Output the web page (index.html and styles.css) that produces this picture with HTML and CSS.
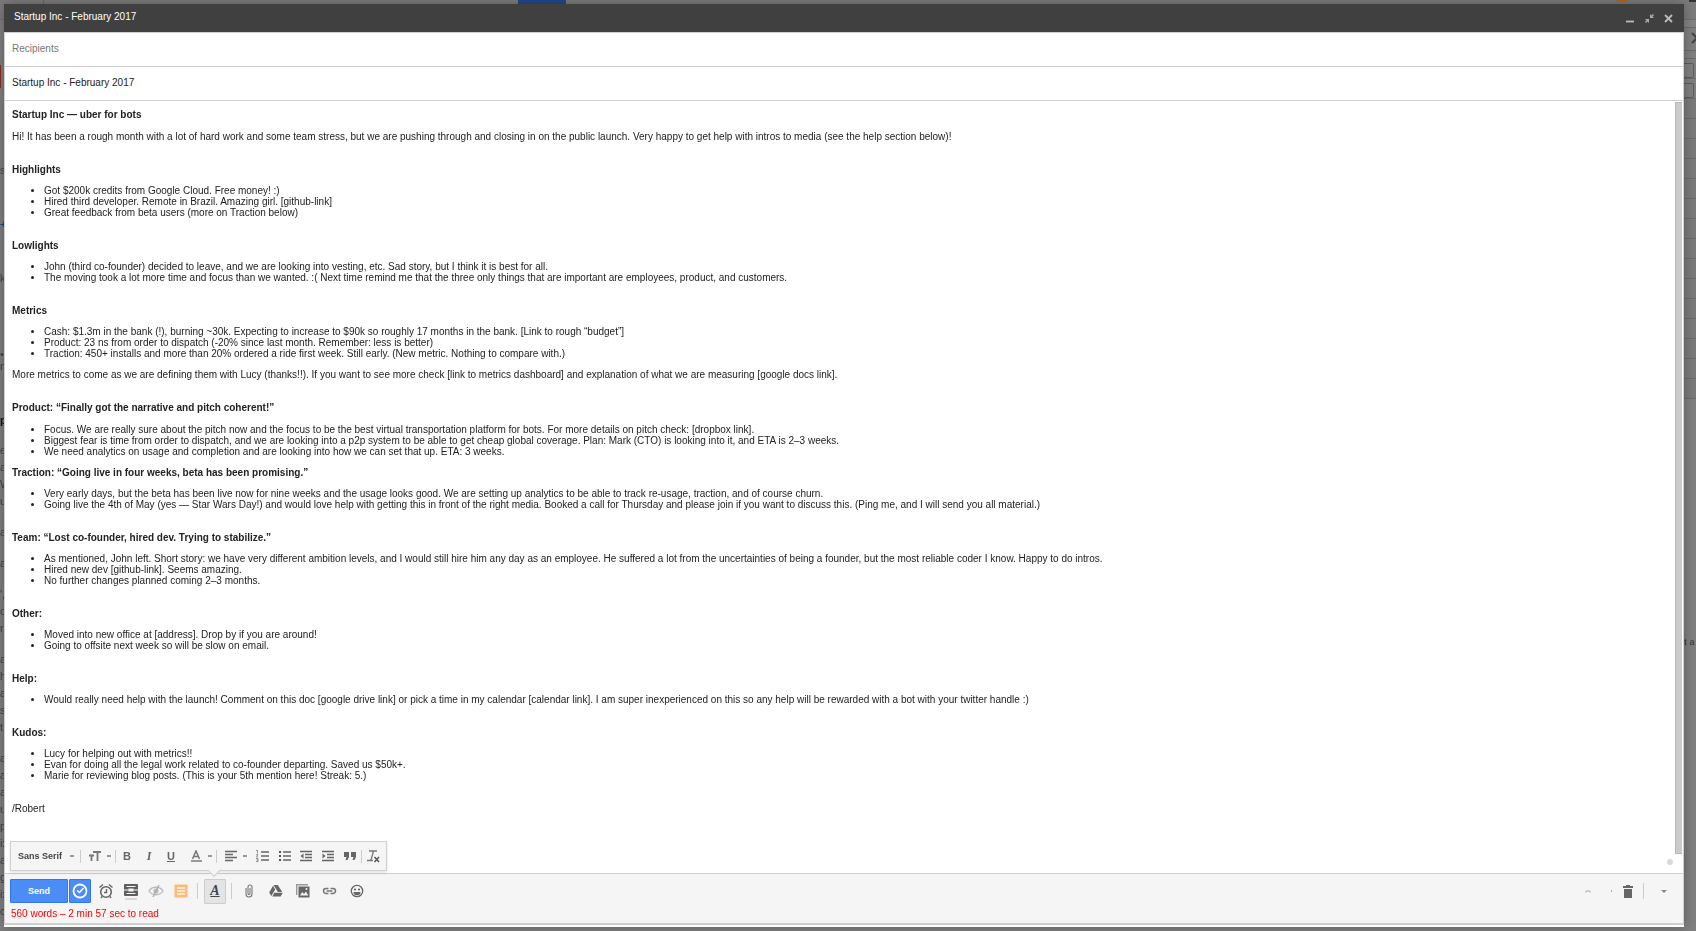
FILE: index.html
```
<!DOCTYPE html>
<html lang="en">
<head>
    <meta charset="UTF-8">
    <meta name="viewport" content="width=device-width, initial-scale=1.0">
    <title>Startup Inc - February 2017</title>
    <link rel="stylesheet" href="styles.css">
</head>
<body>

    <!-- dimmed inbox behind the window -->
    <div class="backdrop" aria-hidden="true">
        <div class="topbar">
            <div class="topbar-logo"></div>
            <div class="topbar-search"></div>
            <div class="topbar-badge"></div>
            <div class="topbar-apps"></div>
        </div>
        <div class="columns">
            <div class="nav">
                <div class="nav-compose"></div>
                <div class="nav-head">s</div>
                <div class="nav-head plus">+</div>
                <div class="nav-head">k</div>
                <div class="nav-people">•<br>n</div>
                <b class="nav-chat">p</b>
                <div class="nav-group">e<br>a<br>W<br>ur</div>
                <div class="nav-group">a</div>
                <div class="nav-group">a</div>
                <div class="nav-group">',<br>o<br>r</div>
                <div class="nav-group">a<br>h<br>a<br>sc<br>t</div>
                <div class="nav-group">a<br>a<br>a<br>u<br>p<br>ix<br>a<br>g<br>ix<br>o call</div>
            </div>
            <div class="side">
                <div class="side-bar"></div>
                <div class="side-arrow">
                    <svg width="5" height="12" viewBox="0 0 5 12"><path d="M1 1l5 5-5 5" fill="none" stroke="#444" stroke-width="2"/></svg>
                </div>
                <div class="side-line"></div>
                <div class="side-row"><span></span></div>
                <div class="side-row"><span></span></div>
                <div class="side-rows"></div>
                <b class="side-text">t a</b>
            </div>
        </div>
    </div>

    <main class="window">
        <header class="titlebar">
            <h1>Startup Inc - February 2017</h1>
            <div class="titlebar-buttons">
                <button type="button" aria-label="Minimize"><svg width="11" height="11" viewBox="0 0 11 11"><path d="M1 8.500h8" stroke="#bbb" stroke-width="1.800"/></svg></button>
                <button type="button" aria-label="Exit full screen"><svg width="11" height="11" viewBox="0 0 11 11"><path d="M6 1v4h4L8.500 3.500 10 2 9 1 7.500 2.500zM5 10V6H1l1.500 1.500L1 9l1 1 1.500-1.500z" fill="#aaa"/></svg></button>
                <button type="button" aria-label="Close"><svg width="11" height="11" viewBox="0 0 11 11"><path d="M2 2l7 7M9 2L2 9" stroke="#bbb" stroke-width="1.800"/></svg></button>
            </div>
        </header>

        <input class="field field-first" type="text" placeholder="Recipients" aria-label="Recipients">
        <input class="field" type="text" value="Startup Inc - February 2017" aria-label="Subject">

        <div class="body">
            <div class="message" contenteditable="true" spellcheck="false" role="textbox" aria-label="Message Body">
                <section>
                    <h2>Startup Inc — uber for bots</h2>
                    <p>Hi! It has been a rough month with a lot of hard work and some team stress, but we are pushing through and closing in on the public launch. Very happy to get help with intros to media (see the help section below)!</p>
                </section>
                <section>
                    <h2>Highlights</h2>
                    <ul>
                        <li>Got $200k credits from Google Cloud. Free money! :)</li>
                        <li>Hired third developer. Remote in Brazil. Amazing girl. [github-link]</li>
                        <li>Great feedback from beta users (more on Traction below)</li>
                    </ul>
                </section>
                <section>
                    <h2>Lowlights</h2>
                    <ul>
                        <li>John (third co-founder) decided to leave, and we are looking into vesting, etc. Sad story, but I think it is best for all.</li>
                        <li>The moving took a lot more time and focus than we wanted. :( Next time remind me that the three only things that are important are employees, product, and customers.</li>
                    </ul>
                </section>
                <section>
                    <h2>Metrics</h2>
                    <ul>
                        <li>Cash: $1.3m in the bank (!), burning ~30k. Expecting to increase to $90k so roughly 17 months in the bank. [Link to rough “budget”]</li>
                        <li>Product: 23 ns from order to dispatch (-20% since last month. Remember: less is better)</li>
                        <li>Traction: 450+ installs and more than 20% ordered a ride first week. Still early. (New metric. Nothing to compare with.)</li>
                    </ul>
                    <p>More metrics to come as we are defining them with Lucy (thanks!!). If you want to see more check [link to metrics dashboard] and explanation of what we are measuring [google docs link].</p>
                </section>
                <section>
                    <h2>Product: “Finally got the narrative and pitch coherent!”</h2>
                    <ul class="spaced">
                        <li>Focus. We are really sure about the pitch now and the focus to be the best virtual transportation platform for bots. For more details on pitch check: [dropbox link].</li>
                        <li>Biggest fear is time from order to dispatch, and we are looking into a p2p system to be able to get cheap global coverage. Plan: Mark (CTO) is looking into it, and ETA is 2–3 weeks.</li>
                        <li>We need analytics on usage and completion and are looking into how we can set that up. ETA: 3 weeks.</li>
                    </ul>
                    <h2>Traction: “Going live in four weeks, beta has been promising.”</h2>
                    <ul>
                        <li>Very early days, but the beta has been live now for nine weeks and the usage looks good. We are setting up analytics to be able to track re-usage, traction, and of course churn.</li>
                        <li>Going live the 4th of May (yes — Star Wars Day!) and would love help with getting this in front of the right media. Booked a call for Thursday and please join if you want to discuss this. (Ping me, and I will send you all material.)</li>
                    </ul>
                </section>
                <section>
                    <h2>Team: “Lost co-founder, hired dev. Trying to stabilize.”</h2>
                    <ul>
                        <li>As mentioned, John left. Short story: we have very different ambition levels, and I would still hire him any day as an employee. He suffered a lot from the uncertainties of being a founder, but the most reliable coder I know. Happy to do intros.</li>
                        <li>Hired new dev [github-link]. Seems amazing.</li>
                        <li>No further changes planned coming 2–3 months.</li>
                    </ul>
                </section>
                <section>
                    <h2>Other:</h2>
                    <ul>
                        <li>Moved into new office at [address]. Drop by if you are around!</li>
                        <li>Going to offsite next week so will be slow on email.</li>
                    </ul>
                </section>
                <section>
                    <h2>Help:</h2>
                    <ul>
                        <li>Would really need help with the launch! Comment on this doc [google drive link] or pick a time in my calendar [calendar link]. I am super inexperienced on this so any help will be rewarded with a bot with your twitter handle :)</li>
                    </ul>
                </section>
                <section>
                    <h2>Kudos:</h2>
                    <ul>
                        <li>Lucy for helping out with metrics!!</li>
                        <li>Evan for doing all the legal work related to co-founder departing. Saved us $50k+.</li>
                        <li>Marie for reviewing blog posts. (This is your 5th mention here! Streak: 5.)</li>
                    </ul>
                </section>
                <p>/Robert</p>
            </div>
            <div class="scroll">
                <div class="scroll-thumb"></div>
                <div class="scroll-dot"></div>
            </div>

            <div class="format-bar" role="toolbar" aria-label="Formatting">
                <label class="font-select">
                    <select aria-label="Font"><option>Sans Serif</option></select>
                    <i class="caret"></i>
                </label>
                <i class="sep"></i>
                <button type="button" class="wide" aria-label="Size">
                    <svg width="12" height="12" viewBox="0 0 12 12"><path d="M4 2h8M8.500 2v9M0 5.500h5M2.500 5.500V11" fill="none" stroke="#777" stroke-width="1.800"/></svg>
                    <i class="caret"></i>
                </button>
                <i class="sep"></i>
                <button type="button" class="letter bold" aria-label="Bold">B</button>
                <button type="button" class="letter italic" aria-label="Italic">I</button>
                <button type="button" class="letter underline" aria-label="Underline">U</button>
                <button type="button" class="wide" aria-label="Text color">
                    <svg width="12" height="12" viewBox="0 0 12 12"><path d="M2.500 9L6 1l3.500 8M4 6.500h4" fill="none" stroke="#777" stroke-width="1.500"/><path d="M1 11h11" stroke="#999" stroke-width="2"/></svg>
                    <i class="caret"></i>
                </button>
                <i class="sep"></i>
                <button type="button" class="wide" aria-label="Align">
                    <svg width="12" height="12" viewBox="0 0 12 12"><path d="M0 1.500h12M0 4.500h8M0 7.500h12M0 10.500h8" stroke="#666" stroke-width="1.300"/></svg>
                    <i class="caret"></i>
                </button>
                <button type="button" aria-label="Numbered list"><svg width="13" height="12" viewBox="0 0 13 12"><path d="M5 2h8M5 6h8M5 10h8" stroke="#666" stroke-width="1.300"/><path d="M0 .5h1.500v3M0 4.800h2L.5 7H2M0 8.500h2v3H0M.5 10H2" fill="none" stroke="#777" stroke-width=".8"/></svg></button>
                <button type="button" aria-label="Bulleted list"><svg width="13" height="12" viewBox="0 0 13 12"><path d="M5 2h8M5 6h8M5 10h8" stroke="#666" stroke-width="1.300"/><path d="M1 2h2M1 6h2M1 10h2" stroke="#555" stroke-width="2"/></svg></button>
                <button type="button" aria-label="Indent less"><svg width="12" height="12" viewBox="0 0 12 12"><path d="M0 1.500h12M5 4.500h7M5 7.500h7M0 10.500h12" stroke="#666" stroke-width="1.300"/><path d="M3.500 3.500v5L.5 6z" fill="#666"/></svg></button>
                <button type="button" aria-label="Indent more"><svg width="12" height="12" viewBox="0 0 12 12"><path d="M0 1.500h12M5 4.500h7M5 7.500h7M0 10.500h12" stroke="#666" stroke-width="1.300"/><path d="M.5 3.500v5l3-2.500z" fill="#666"/></svg></button>
                <button type="button" aria-label="Quote"><svg width="12" height="12" viewBox="0 0 12 12"><path d="M0 2h5v5L3.500 10H1.500l1-3H0zM7 2h5v5l-1.500 3h-2l1-3H7z" fill="#666"/></svg></button>
                <i class="sep"></i>
                <button type="button" aria-label="Remove formatting"><svg width="13" height="13" viewBox="0 0 13 13"><path d="M2 1h8M6.500 1L4 10M0 10.500h6" fill="none" stroke="#777" stroke-width="1.300"/><path d="M7.500 7l4.500 5M12 7l-4.500 5" stroke="#555" stroke-width="1.500"/></svg></button>
                <div class="notch"></div>
            </div>
        </div>

        <footer class="footer">
            <div class="actions">
                <button type="button" class="send">Send</button>
                <button type="button" class="send later" aria-label="Send later"><svg width="16" height="16" viewBox="0 0 16 16"><circle cx="8" cy="8" r="6.500" fill="none" stroke="#fff" stroke-width="1.800"/><path d="M5 7.500L7.500 9.500l4-4.500" fill="none" stroke="#fff" stroke-width="1.600"/></svg></button>
                <div class="group plugins">
                    <button type="button" aria-label="Reminder"><svg width="16" height="16" viewBox="0 0 16 16"><circle cx="8" cy="9" r="5.300" fill="none" stroke="#666" stroke-width="1.600"/><path d="M1.500 4.500L5 1.500M14.500 4.500L11 1.500M8.500 6v3.500H6M4 13.500l-1 1.500M12 13.500l1 1.500" fill="none" stroke="#666" stroke-width="1.400"/></svg></button>
                    <button type="button" aria-label="Templates"><svg width="14" height="17" viewBox="0 0 14 17"><path d="M1 1h12q1 0 1 1v4.500H9.500v-1h-5v1H0V2q0-1 1-1zM0 7.500h4.500v1h5v-1H14V12q0 1-1 1H1q-1 0-1-1z" fill="#5f5f5f"/><path d="M2.500 3.500h9M2.500 10.500h9" stroke="#f5f5f5"/><path d="M1 16h12" stroke="#bbb"/></svg></button>
                    <button type="button" aria-label="Tracking off"><svg width="16" height="12" viewBox="0 0 16 12"><path d="M1 6c3-5 11-5 14 0-3 5-11 5-14 0z" fill="none" stroke="#bbb" stroke-width="1.300"/><circle cx="8" cy="6" r="2.600" fill="#bbb"/><path d="M5 12L11 0" stroke="#aaa" stroke-width="1.300"/></svg></button>
                    <button type="button" aria-label="Notes"><svg width="14" height="14" viewBox="0 0 14 14"><path d="M.5 .5h13v13H.5z" fill="#fdbb79"/><path d="M3 4h8M3 7h8M3 10h8" stroke="#fff3e6" stroke-width="1.400"/></svg></button>
                </div>
                <i class="sep"></i>
                <button type="button" class="format-toggle" aria-label="Formatting options" aria-pressed="true">A</button>
                <i class="sep"></i>
                <div class="group attach">
                    <button type="button" aria-label="Attach files"><svg width="8" height="14" viewBox="0 0 8 14"><path d="M1 4v6a3 3 0 0 0 6 0V3a2 2 0 0 0-4 0v6.500a1 1 0 0 0 2 0V4" fill="none" stroke="#777" stroke-width="1.100"/></svg></button>
                    <button type="button" aria-label="Insert from Drive"><svg width="14" height="12" viewBox="0 0 14 12"><path d="M4.500 0h4.300l4.400 7H8.900zM4 .8l2.200 3.600L2.300 11 .2 7.500zM5.300 7.800h8.400L11.700 11.500H3.300z" fill="#666"/></svg></button>
                    <button type="button" aria-label="Insert photo"><svg width="14" height="14" viewBox="0 0 14 14"><path d="M.7 11V.7H12" fill="none" stroke="#999" stroke-width="1.400"/><path d="M2.500 2.500H13.500v11h-11z" fill="#666"/><path d="M4 11.500l2.200-3.500 1.800 2 2-2.500 2.300 4z" fill="#f4f4f4"/><circle cx="10.500" cy="5" r="1" fill="#f4f4f4"/></svg></button>
                    <button type="button" aria-label="Insert link"><svg width="15" height="8" viewBox="0 0 15 8"><path d="M6.500 1.500H4a2.500 2.500 0 0 0 0 5h2.500M8.500 1.500H11a2.500 2.500 0 0 1 0 5H8.500M4.500 4h6" fill="none" stroke="#777" stroke-width="1.500"/></svg></button>
                    <button type="button" aria-label="Insert emoji"><svg width="14" height="14" viewBox="0 0 14 14"><circle cx="7" cy="7" r="5.700" fill="none" stroke="#666" stroke-width="1.300"/><circle cx="5" cy="5.500" r="1" fill="#555"/><circle cx="9" cy="5.500" r="1" fill="#555"/><path d="M3.500 8h7a3.500 3.200 0 0 1-7 0z" fill="#666"/></svg></button>
                </div>
                <div class="group extra">
                    <svg class="faint" width="28" height="4" viewBox="0 0 28 4"><path d="M1 3.500V2h4v1.500M26.500 1v2" fill="none" stroke="#aaa"/></svg>
                    <button type="button" aria-label="Discard draft"><svg width="10" height="13" viewBox="0 0 10 13"><path d="M3 0h4v1h3v2H0V1h3zM1 4h8v9H1z" fill="#666"/></svg></button>
                    <i class="sep"></i>
                    <button type="button" class="more" aria-label="More options"><i class="caret"></i></button>
                </div>
            </div>
            <p class="words">560 words – 2 min 57 sec to read</p>
        </footer>
    </main>

</body>
</html>
```
FILE: styles.css
```
* {
    box-sizing: border-box;
}

body {
    margin: 0;
    padding: 4px 12px 4px 4px;
    height: 100vh;
    overflow: hidden;
    background: #808080;
    font-family: "Liberation Sans", Arial, sans-serif;
    font-size: 10px;
    line-height: 11px;
    color: #222;
}

h1, h2, p, ul {
    margin: 0;
    font-size: 10px;
}

button {
    display: flex;
    align-items: center;
    justify-content: center;
    padding: 0;
    border: none;
    background: transparent;
    font-family: inherit;
    cursor: pointer;
}

/* inbox behind */
.backdrop {
    position: fixed;
    inset: 0;
    z-index: -1;
    display: flex;
    flex-direction: column;
    overflow: hidden;
    color: #444;
}

.topbar {
    flex: none;
    display: flex;
    height: 20px;
    background: #7c7c7c;
    border-bottom: 1px solid #707070;
}

.topbar-logo {
    width: 44px;
    border-right: 1px solid #666;
}

.topbar-search {
    width: 48px;
    margin-left: 474px;
    background: #24488a;
}

.topbar-badge {
    width: 11px;
    height: 2px;
    margin-left: auto;
    background: #b8651b;
}

.topbar-apps {
    width: 7px;
    height: 2px;
    margin-left: 61px;
    background: #333;
}

.columns {
    flex: 1;
    display: flex;
    justify-content: space-between;
}

.nav {
    width: 30px;
    font-size: 11px;
    line-height: 17px;
    white-space: nowrap;
}

.nav-compose {
    width: 1px;
    height: 23px;
    margin: 45px 0 74px;
    background: #8a2a1c;
}

.nav-head {
    height: 54px;
}

.nav-head.plus {
    color: #1a3f86;
}

.nav-people {
    height: 88px;
    padding-top: 24px;
    line-height: 12px;
}

.nav-chat {
    display: block;
    height: 30px;
    color: #111;
}

.nav-group {
    margin-bottom: 14px;
}

.side {
    width: 12px;
}

.side-bar {
    height: 8px;
    background: #848484;
    border-bottom: 1px solid #6c6c6c;
}

.side-arrow {
    height: 23px;
    padding: 4px 0 0 7px;
    border-bottom: 1px solid #6c6c6c;
}

.side-line {
    height: 8px;
    border-bottom: 1px solid #6c6c6c;
}

.side-row {
    height: 20px;
    padding-top: 4px;
    border-bottom: 1px solid #6c6c6c;
}

.side-row span {
    display: block;
    width: 10px;
    height: 15px;
    border: 1px solid #5c5c5c;
    border-left: none;
    border-radius: 0 2px 2px 0;
}

.side-rows {
    height: 300px;
    background: repeating-linear-gradient(#7b7b7b 0, #7b7b7b 19px, #6c6c6c 19px, #6c6c6c 20px);
}

.side-text {
    display: block;
    padding-top: 238px;
    font-size: 9px;
    white-space: nowrap;
}

/* compose window */
.window {
    display: flex;
    flex-direction: column;
    height: 100%;
    padding-bottom: 2px;
    background: #fff;
    box-shadow: 0 0 12px rgba(0, 0, 0, .3);
}

.titlebar {
    display: flex;
    align-items: center;
    justify-content: space-between;
    height: 28px;
    padding: 0 6px 0 10px;
    background: #404040;
}

.titlebar h1 {
    padding-bottom: 4px;
    font-weight: normal;
    color: #fff;
}

.titlebar-buttons {
    display: flex;
}

.titlebar-buttons button {
    width: 19px;
    height: 19px;
}

.field {
    width: 100%;
    height: 34px;
    padding: 0 7px 2px;
    border: 1px solid #cfcfcf;
    border-top: none;
    border-radius: 0;
    outline: none;
    background: #fff;
    font-family: inherit;
    font-size: 10px;
    color: #222;
}

.field-first {
    height: 35px;
    border-top: 1px solid #cfcfcf;
}

.field::placeholder {
    color: #777;
}

.body {
    position: relative;
    flex: 1;
    display: flex;
    min-height: 0;
    border: 1px solid #cfcfcf;
    border-width: 0 1px;
}

.message {
    flex: 1;
    padding: 8px 7px;
    overflow: hidden;
    outline: none;
}

.message section {
    margin-bottom: 22px;
}

.message section > * + * {
    margin-top: 10px;
}

.message section:first-child p,
.message section > .spaced {
    margin-top: 11px;
}

.message ul {
    padding-left: 32px;
}

.scroll {
    display: flex;
    flex-direction: column;
    align-items: flex-end;
    width: 15px;
    padding: 1px 1px 8px 0;
}

.scroll-thumb {
    flex: 1;
    width: 7px;
    border: 1px solid #b8b8b8;
    border-width: 1px 0 1px 1px;
    background: #cbcbcb;
}

.scroll-dot {
    width: 6px;
    height: 6px;
    margin: 5px 9px 0 0;
    border-radius: 50%;
    background: #d8d8d8;
}

/* formatting toolbar */
.format-bar {
    position: absolute;
    left: 5px;
    bottom: 2px;
    display: flex;
    align-items: center;
    height: 30px;
    padding-right: 2px;
    border: 1px solid #cfcfcf;
    background: #f5f5f5;
    box-shadow: 0 2px 3px rgba(0, 0, 0, .1);
}

.format-bar button {
    width: 22px;
    height: 28px;
    color: #666;
}

.format-bar button.wide {
    width: 34px;
    gap: 6px;
    padding-left: 3px;
}

.font-select {
    display: flex;
    align-items: center;
    width: 69px;
    padding-left: 7px;
}

.font-select select {
    width: 52px;
    padding: 0;
    border: none;
    outline: none;
    appearance: none;
    background: transparent;
    font-family: inherit;
    font-size: 9px;
    font-weight: bold;
    color: #444;
}

.format-bar .letter {
    font-size: 11px;
    font-weight: bold;
}

.format-bar .italic {
    font-family: "Liberation Serif", serif;
    font-size: 12px;
    font-style: italic;
}

.letter.underline {
    text-decoration: underline;
}

.caret {
    width: 4px;
    height: 2px;
    background: #999;
}

.sep {
    width: 1px;
    height: 13px;
    background: #ccc;
}

.notch {
    position: absolute;
    left: 198px;
    bottom: -5px;
    width: 10px;
    height: 10px;
    border: 1px solid #cfcfcf;
    border-width: 0 1px 1px 0;
    background: #f5f5f5;
    transform: rotate(45deg);
}

/* footer */
.footer {
    height: 52px;
    padding: 4px 5px 0;
    border: 1px solid #cfcfcf;
    border-bottom-width: 2px;
    background: #f5f5f5;
}

.actions {
    display: flex;
    align-items: center;
    height: 26px;
}

.actions .sep {
    height: 16px;
}

.send {
    width: 58px;
    height: 24px;
    border: 1px solid #3079ed;
    border-radius: 1px;
    background: #4b8cf7;
    font-size: 9px;
    font-weight: bold;
    color: #fff;
}

.send.later {
    width: 22px;
    margin-left: 1px;
}

.group {
    display: flex;
    align-items: center;
}

.plugins {
    margin: 0 4px 0 2px;
}

.plugins button {
    width: 25px;
    height: 24px;
}

.format-toggle {
    width: 22px;
    height: 25px;
    margin: 0 5px 0 6px;
    border: 1px solid #ccc;
    border-radius: 1px;
    background: #e4e4e4;
    font-family: "Liberation Serif", serif;
    font-size: 14px;
    font-style: italic;
    font-weight: bold;
    text-decoration: underline;
    color: #444;
}

.attach {
    margin-left: 3px;
}

.attach button {
    width: 27px;
    height: 24px;
}

.extra {
    margin-left: auto;
}

.extra button {
    width: 30px;
    height: 24px;
}

.extra .more {
    width: 34px;
    padding-left: 6px;
}

.more .caret {
    width: 0;
    height: 0;
    border: 3px solid transparent;
    border-top-color: #888;
    border-bottom: none;
    background: none;
}

.words {
    padding: 4px 0 0 1px;
    color: #f00;
}
```
